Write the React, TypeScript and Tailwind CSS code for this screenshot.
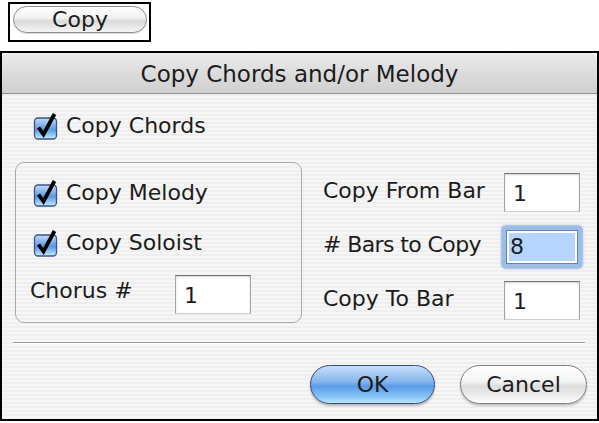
import React from 'react';

const stripes =
  'bg-[repeating-linear-gradient(180deg,#efefef_0px,#efefef_2px,#f6f6f6_2px,#f6f6f6_4px)]';

const AquaCheck = () => (
  <svg width="26" height="28" viewBox="0 0 26 28" className="shrink-0">
    <defs>
      <linearGradient id="cbfill" x1="0" y1="0" x2="0" y2="1">
        <stop offset="0" stopColor="#c4dcf7" />
        <stop offset="0.45" stopColor="#6fa4e6" />
        <stop offset="0.55" stopColor="#5a97e4" />
        <stop offset="1" stopColor="#c6ecff" />
      </linearGradient>
    </defs>
    <rect x="1.5" y="6" width="22" height="21" rx="3.5" fill="url(#cbfill)" stroke="#3d5488" strokeWidth="1.3" />
    <path d="M5.5 15.5 L10.5 22.5 L21.5 2" fill="none" stroke="#000" strokeWidth="3.8" strokeLinejoin="miter" />
  </svg>
);

const Field = ({ value }: { value: string }) => (
  <div className="w-[76px] h-[39px] bg-white border border-[#a4a4a4] border-t-[#737373] border-b-[#cfcfcf] shadow-[inset_0_1px_2px_rgba(0,0,0,0.18)] pl-[8px] pt-[7px] leading-[26px]">
    {value}
  </div>
);

const FocusField = ({ value }: { value: string }) => (
  <div className="w-[80px] h-[42px] rounded-[4px] bg-[#9dbde6] shadow-[0_0_2px_1px_rgba(90,140,210,0.6)] p-[4px]">
    <div className="w-full h-full bg-white border border-[#5f84bd] p-[2px]">
      <div className="w-full h-full bg-[#b5d5ff] leading-[28px] pl-[1px]">{value}</div>
    </div>
  </div>
);

export default function App() {
  return (
    <div className="w-[599px] h-[423px] bg-white overflow-hidden font-['DejaVu_Sans',sans-serif] text-[22px] text-[#1c1c1c]">
      <div className="pt-[2px] pl-[8px]">
        <div className="w-[143px] h-[40px] border-2 border-black pt-[2px] pl-[3px]">
          <div className="w-[134px] h-[27px] rounded-full border border-[#8d8d8d] bg-[linear-gradient(#ffffff,#f1f1f1_45%,#dadada_55%,#f4f4f4)] shadow-[0_1px_1px_rgba(0,0,0,0.15)] flex items-center justify-center leading-[26px]">
            Copy
          </div>
        </div>
      </div>

      <div className="mt-[9px] w-[599px] h-[370px] border-2 border-black flex flex-col">
        <div className="h-[41px] shrink-0 rounded-t-[6px] border-b border-[#8f8f8f] bg-[linear-gradient(#ebebeb,#d9d9d9_60%,#d0d0d0)] flex items-center justify-center text-[23px] leading-[28px] pt-[2px]">
          Copy Chords and/or Melody
        </div>

        <div className={`flex-1 ${stripes} flex flex-col`}>
          <div className="pt-[19px] pl-[31px] flex items-center h-[45px] leading-[26px]">
            <AquaCheck />
            <span className="ml-[7px]">Copy Chords</span>
          </div>

          <div className="mt-[23px] pl-[13px] flex items-start leading-[26px]">
            <div className="w-[287px] h-[161px] rounded-[9px] border border-[#a9a9a9] shadow-[inset_0_1px_0_rgba(255,255,255,0.6)] pt-[15px] pl-[17px]">
              <div className="flex items-center h-[30px]">
                <AquaCheck />
                <span className="ml-[7px]">Copy Melody</span>
              </div>
              <div className="flex items-center h-[30px] mt-[20px]">
                <AquaCheck />
                <span className="ml-[7px]">Copy Soloist</span>
              </div>
              <div className="flex items-start mt-[17px] -ml-[3px]">
                <span className="pt-[3px] w-[145px]">Chorus #</span>
                <Field value="1" />
              </div>
            </div>

            <div className="ml-[21px] pt-[11px] w-[259px] flex flex-col">
              <div className="flex items-start justify-between">
                <span className="pt-[5px]">Copy From Bar</span>
                <div className="mr-[2px]"><Field value="1" /></div>
              </div>
              <div className="flex items-start justify-between mt-[14px]">
                <span className="pt-[6px] tracking-[-0.6px]"># Bars to Copy</span>
                <FocusField value="8" />
              </div>
              <div className="flex items-start justify-between mt-[13px]">
                <span className="pt-[5px]">Copy To Bar</span>
                <div className="mr-[2px]"><Field value="1" /></div>
              </div>
            </div>
          </div>

          <div className="mt-[19px] ml-[11px] w-[572px] h-[2px] border-t border-[#9a9a9a] border-b border-b-white" />

          <div className="mt-[21px] pr-[10px] flex justify-end gap-[25px] leading-[26px]">
            <div className="w-[125px] h-[39px] rounded-full border border-[#34498f] bg-[linear-gradient(#c8dff8,#86b6ec_42%,#5b9be8_55%,#8cc6f5_85%,#b8e6ff)] shadow-[0_2px_2px_rgba(0,0,0,0.25)] flex items-center justify-center">
              OK
            </div>
            <div className="w-[127px] h-[39px] rounded-full border border-[#7e7e7e] bg-[linear-gradient(#ffffff,#f3f3f3_42%,#dcdcdc_55%,#f0f0f0_85%,#ffffff)] shadow-[0_2px_2px_rgba(0,0,0,0.2)] flex items-center justify-center">
              Cancel
            </div>
          </div>
        </div>
      </div>
    </div>
  );
}
